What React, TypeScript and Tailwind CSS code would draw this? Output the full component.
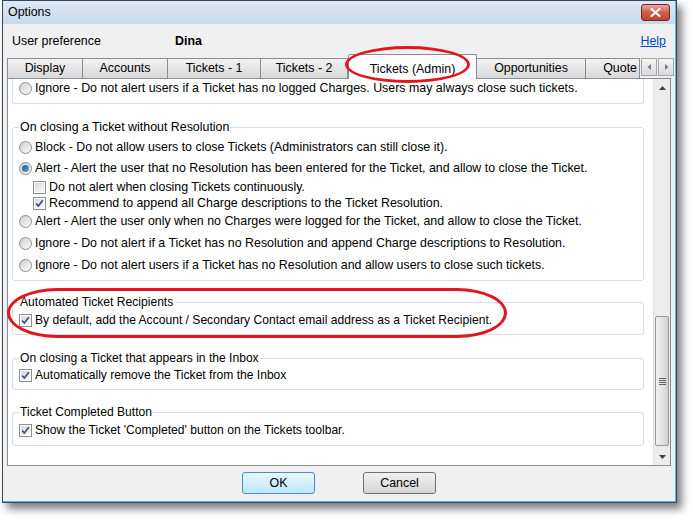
import React from 'react';

const tabs = [
  { label: 'Display', cls: 'w-[76px]' },
  { label: 'Accounts', cls: 'w-[85px]' },
  { label: 'Tickets - 1', cls: 'w-[93px]' },
  { label: 'Tickets - 2', cls: 'w-[87px]' },
  { label: 'Tickets (Admin)', cls: 'w-[129px]', active: true },
  { label: 'Opportunities', cls: 'w-[109px]' },
  { label: 'Quote', cls: 'w-[54px]', cut: true },
];

function Radio({ checked }: { checked?: boolean }) {
  return (
    <span className="w-[13px] h-[13px] rounded-full border border-[#8e8f8f] bg-linear-to-br from-[#cfcfcf] to-[#fbfbfb] flex items-center justify-center shrink-0">
      {checked && <span className="w-[7px] h-[7px] rounded-full bg-linear-to-br from-[#1f4f8c] to-[#6aa9e0]" />}
    </span>
  );
}

function Check({ checked }: { checked?: boolean }) {
  return (
    <span className="w-[13px] h-[13px] border border-[#8e8f8f] bg-white p-[1px] shrink-0 flex">
      <span className="flex-1 bg-linear-to-br from-[#d8d8d8] to-[#fbfbfb] flex items-center justify-center">
        {checked && (
          <svg width="9" height="9" viewBox="0 0 9 9">
            <path d="M1.2 4.6 L3.4 7 L7.8 1.2" stroke="#3b4f8c" strokeWidth="1.7" fill="none" />
          </svg>
        )}
      </span>
    </span>
  );
}

function RadioRow({ text, checked, h }: { text: string; checked?: boolean; h: string }) {
  return (
    <div className={`flex items-center gap-[3px] ${h}`}>
      <Radio checked={checked} />
      <span>{text}</span>
    </div>
  );
}

function CheckRow({ text, checked, h, indent }: { text: string; checked?: boolean; h: string; indent?: boolean }) {
  return (
    <div className={`flex items-center gap-[3px] ${h} ${indent ? 'pl-[14px]' : ''}`}>
      <Check checked={checked} />
      <span>{text}</span>
    </div>
  );
}

function Group({ title, className, children }: { title: string; className: string; children: React.ReactNode }) {
  return (
    <fieldset className={`ml-[4px] w-[632px] border border-[#d5dfe5] rounded-[3px] ${className}`}>
      <legend className="px-[1px] leading-[14px]">{title}</legend>
      {children}
    </fieldset>
  );
}

export default function App() {
  return (
    <div className="w-[693px] h-[520px] bg-white text-[12.4px] text-black relative" style={{ fontFamily: '"Liberation Sans", Arial, sans-serif' }}>
      <div className="ml-[2px] w-[675px] h-[503px] border border-[#3b4857] shadow-[5px_6px_8px_rgba(0,0,0,0.5)] flex flex-col">
        <div className="flex-1 flex flex-col border-r border-b border-[#5ab4e6]">
          {/* title bar */}
          <div className="h-[23px] bg-linear-to-b from-[#dce8f5] to-[#c7d9ed] flex items-center shrink-0">
            <span className="pl-[5px]">Options</span>
            <div className="ml-auto mr-[5px] w-[29px] h-[17px] rounded-[3px] border border-[#6b2b25] bg-linear-to-b from-[#e9a99b] via-[#cc5d4d] to-[#c0442f] flex items-center justify-center">
              <svg width="11" height="9" viewBox="0 0 11 9">
                <path d="M1.5 1 L9.5 8 M9.5 1 L1.5 8" stroke="white" strokeWidth="2.2" strokeLinecap="round" />
              </svg>
            </div>
          </div>

          <div className="flex-1 bg-[#f0f0f0] flex flex-col">
            {/* user preference row */}
            <div className="mt-[8px] h-[18px] flex items-center pl-[9px] pr-[9px]">
              <span className="w-[163px]">User preference</span>
              <span className="font-bold">Dina</span>
              <span className="ml-auto text-[#0645c8] underline">Help</span>
            </div>

            {/* tabs */}
            <div className="mt-[3px] h-[25px] flex items-end pl-[4px]">
              {tabs.map((t) =>
                t.active ? (
                  <div key={t.label} className={`${t.cls} h-[25px] bg-white border border-b-0 border-[#898c95] flex items-start justify-center pt-[5px] -mb-px relative z-10 rounded-t-[2px]`}>
                    {t.label}
                  </div>
                ) : (
                  <div key={t.label} className={`${t.cls} h-[20px] bg-linear-to-b from-[#f2f2f2] to-[#d9d9d9] border border-b-0 border-l-0 first:border-l border-[#898c95] flex items-center overflow-hidden ${t.cut ? 'justify-end pr-[2px]' : 'justify-center'}`}>
                    {t.label}
                  </div>
                )
              )}
              <div className="ml-[1px] mb-[2px] flex gap-[1px]">
                {['M6 2 L2.5 5 L6 8', 'M3 2 L6.5 5 L3 8'].map((d) => (
                  <div key={d} className="w-[16px] h-[18px] border border-[#a7a7a7] bg-linear-to-b from-[#f4f4f4] to-[#dadada] flex items-center justify-center">
                    <svg width="9" height="10" viewBox="0 0 9 10">
                      <path d={d + ' Z'} fill="#6b7ea6" />
                    </svg>
                  </div>
                ))}
              </div>
            </div>

            {/* panel */}
            <div className="ml-[4px] w-[664px] h-[388px] border border-[#898c95] bg-white flex">
              <div className="flex-1 flex flex-col">
                <div className="ml-[4px] w-[632px] border border-t-0 border-[#d5dfe5] rounded-b-[3px] pl-[6px] pb-[6px]">
                  <RadioRow h="h-[18px]" text="Ignore - Do not alert users if a Ticket has no logged Charges. Users may always close such tickets." />
                </div>

                <Group title="On closing a Ticket without Resolution" className="mt-[16px] pl-[6px] pt-[2px] pb-[4px]">
                  <RadioRow h="h-[22px]" text="Block - Do not allow users to close Tickets (Administrators can still close it)." />
                  <RadioRow h="h-[21px]" checked text="Alert - Alert the user that no Resolution has been entered for the Ticket, and allow to close the Ticket." />
                  <CheckRow h="h-[16px]" indent text="Do not alert when closing Tickets continuously." />
                  <CheckRow h="h-[16px]" indent checked text="Recommend to append all Charge descriptions to the Ticket Resolution." />
                  <RadioRow h="h-[21px]" text="Alert - Alert the user only when no Charges were logged for the Ticket, and allow to close the Ticket." />
                  <RadioRow h="h-[22px]" text="Ignore - Do not alert if a Ticket has no Resolution and append Charge descriptions to Resolution." />
                  <RadioRow h="h-[22px]" text="Ignore - Do not alert users if a Ticket has no Resolution and allow users to close such tickets." />
                </Group>

                <div className="text-[12.1px]">
                  <Group title="Automated Ticket Recipients" className="mt-[14px] pl-[6px] pt-[3px] pb-[6px]">
                    <CheckRow h="h-[16px]" checked text="By default, add the Account / Secondary Contact email address as a Ticket Recipient." />
                  </Group>

                  <Group title="On closing a Ticket that appears in the Inbox" className="mt-[16px] pl-[6px] pt-[2px] pb-[6px]">
                    <CheckRow h="h-[16px]" checked text="Automatically remove the Ticket from the Inbox" />
                  </Group>

                  <Group title="Ticket Completed Button" className="mt-[15px] pl-[6px] pt-[3px] pb-[7px]">
                    <CheckRow h="h-[16px]" checked text="Show the Ticket 'Completed' button on the Tickets toolbar." />
                  </Group>
                </div>
              </div>

              {/* scrollbar */}
              <div className="w-[17px] bg-[#ececec] border-l border-[#e3e3e3] flex flex-col">
                <div className="h-[17px] flex items-center justify-center">
                  <svg width="7" height="4" viewBox="0 0 7 4"><path d="M0 4 L3.5 0 L7 4 Z" fill="#404040" /></svg>
                </div>
                <div className="h-[220px]" />
                <div className="h-[130px] mx-[1px] rounded-[2px] border border-[#989898] bg-linear-to-r from-[#f1f1f1] via-[#e4e4e4] to-[#cfcfcf] flex items-center justify-center">
                  <div className="flex flex-col gap-[1px]">
                    <div className="w-[7px] h-px bg-[#666]" />
                    <div className="w-[7px] h-px bg-[#666]" />
                    <div className="w-[7px] h-px bg-[#666]" />
                    <div className="w-[7px] h-px bg-[#666]" />
                  </div>
                </div>
                <div className="flex-1" />
                <div className="h-[17px] flex items-center justify-center">
                  <svg width="7" height="4" viewBox="0 0 7 4"><path d="M0 0 L3.5 4 L7 0 Z" fill="#404040" /></svg>
                </div>
              </div>
            </div>

            {/* footer */}
            <div className="flex-1 flex items-center justify-center gap-[48px] pb-[1px]">
              <button className="w-[73px] h-[22px] rounded-[3px] border border-[#3c8fd0] bg-linear-to-b from-[#eaf6fd] to-[#bee6fd]">OK</button>
              <button className="w-[73px] h-[22px] rounded-[3px] border border-[#707070] bg-linear-to-b from-[#f2f2f2] to-[#d5d5d5]">Cancel</button>
            </div>
          </div>
        </div>
      </div>

      {/* annotation ellipses */}
      <div className="absolute left-[345px] top-[46px] w-[125px] h-[37px] border-[3px] border-[#e2161c] rounded-[50%] z-20" />
      <div className="absolute left-[7px] top-[288px] w-[500px] h-[50px] border-[3px] border-[#e2161c] rounded-[50px/25px] z-20" />
    </div>
  );
}
